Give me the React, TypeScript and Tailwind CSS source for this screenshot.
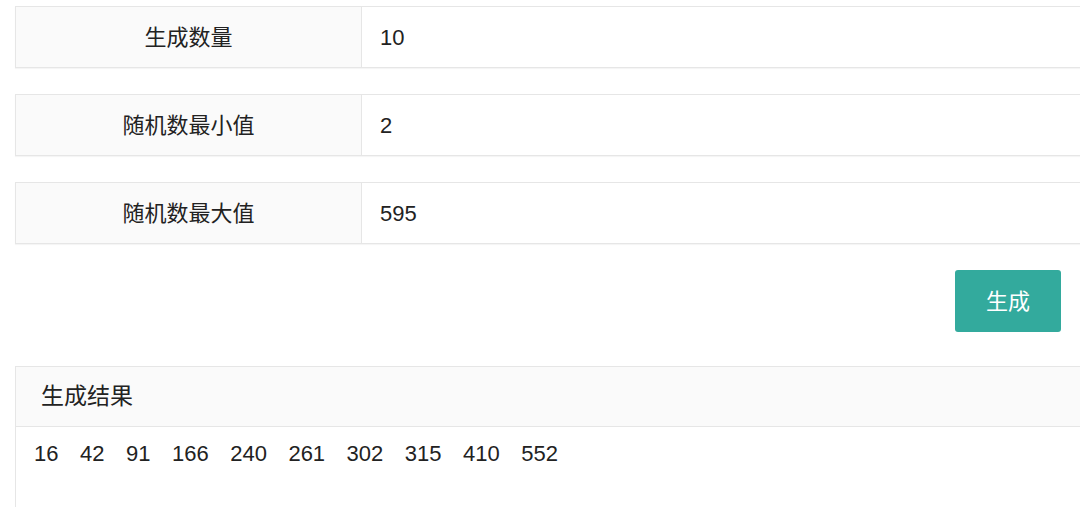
import * as React from 'react';

const fields = [
  { label: '生成数量', value: '10' },
  { label: '随机数最小值', value: '2' },
  { label: '随机数最大值', value: '595' },
];

const results = [16, 42, 91, 166, 240, 261, 302, 315, 410, 552];

const font = { fontFamily: '"Liberation Sans", "Noto Sans CJK SC", sans-serif' };

export default function App() {
  return (
    <div className="h-[507px] w-[1080px] overflow-hidden bg-white text-[#222]" style={font}>
      <div className="pl-[15px] pt-[6px]">
        <div className="flex flex-col gap-[26px]">
          {fields.map((f) => (
            <div
              key={f.label}
              className="flex h-[62px] border border-r-0 border-[#e6e6e6] shadow-[0_1px_1px_rgba(0,0,0,0.04)]"
            >
              <div className="flex w-[346px] shrink-0 items-center justify-center border-r border-[#e6e6e6] bg-[#fafafa] text-[22px]">
                {f.label}
              </div>
              <div className="flex flex-1 items-center pl-[18px] text-[22px]">{f.value}</div>
            </div>
          ))}
        </div>

        <div className="mt-[26px] flex justify-end pr-[19px]">
          <button className="h-[62px] w-[106px] rounded-[3px] bg-[#33aa9d] text-[22px] text-white">
            生成
          </button>
        </div>

        <div className="mt-[34px] border border-r-0 border-[#e6e6e6]">
          <div className="flex h-[60px] items-center border-b border-[#e6e6e6] bg-[#fafafa] pl-[25px] text-[23px]">
            生成结果
          </div>
          <div className="flex h-[100px] items-start gap-[21.5px] pl-[18px] pt-[10px] text-[22px]">
            {results.map((n) => (
              <span key={n}>{n}</span>
            ))}
          </div>
        </div>
      </div>
    </div>
  );
}
